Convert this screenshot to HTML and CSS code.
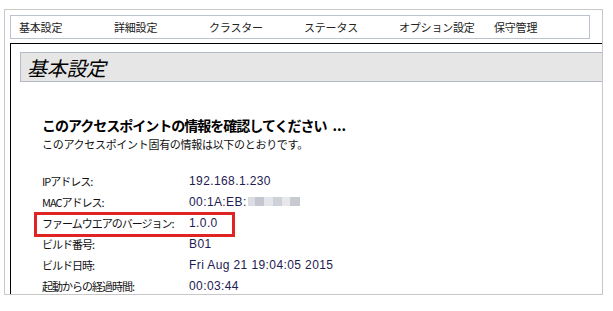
FILE: index.html
```html
<!DOCTYPE html>
<html lang="ja">

<head>
  <meta charset="UTF-8">
  <title>基本設定</title>
  <link rel="stylesheet" href="styles.css">
</head>

<body>
  <div class="frame">
    <!-- 上部メニュー -->
    <nav class="top-nav">
      <a href="#">基本設定</a>
      <a href="#">詳細設定</a>
      <a href="#">クラスター</a>
      <a href="#">ステータス</a>
      <a href="#">オプション設定</a>
      <a href="#">保守管理</a>
    </nav>

    <!-- メイン領域 -->
    <div class="main">
      <div class="title-bar">
        <h1>基本設定</h1>
      </div>

      <div class="info">
        <h2>このアクセスポイントの情報を確認してください<span class="dots">...</span></h2>
        <p class="lead">このアクセスポイント固有の情報は以下のとおりです。</p>

        <div class="rows">
          <div class="row">
            <span class="label">IPアドレス:</span>
            <span class="value">192.168.1.230</span>
          </div>
          <div class="row">
            <span class="label">MACアドレス:</span>
            <span class="value">00:1A:EB:<span class="blur"><i class="b1"></i><i class="b2"></i><i class="b3"></i><i class="b4"></i><i class="b5"></i><i class="b6"></i></span></span>
          </div>
          <div class="row marked">
            <span class="label">ファームウエアのバージョン:</span>
            <span class="value">1.0.0</span>
          </div>
          <div class="row">
            <span class="label">ビルド番号:</span>
            <span class="value">B01</span>
          </div>
          <div class="row">
            <span class="label">ビルド日時:</span>
            <span class="value">Fri Aug 21 19:04:05 2015</span>
          </div>
          <div class="row">
            <span class="label">起動からの経過時間:</span>
            <span class="value">00:03:44</span>
          </div>
        </div>
      </div>
    </div>
  </div>
</body>

</html>
```

FILE: styles.css
```css
/* ページ全体 */
html,
body {
  margin: 0;
  padding: 0;
  background-color: white;
  font-family: "Noto Sans CJK JP", sans-serif;
  color: #111;
}

/* 外枠 */
.frame {
  box-sizing: border-box;
  margin: 9px 0 0 4px;
  width: 599px;
  height: 286px;
  border: 1px solid #c8c8c8;
  padding: 5px 0 0 5px;
  overflow: hidden;
}

/* 上部メニュー */
.top-nav {
  box-sizing: border-box;
  width: 580px;
  height: 24px;
  border: 1px solid #bcc2d0;
  padding-left: 8px;
  display: flex;
  align-items: center;
}

.top-nav a {
  width: 95px;
  flex: none;
  font-size: 11px;
  letter-spacing: -0.2px;
  color: #222;
  text-decoration: none;
}

/* メイン領域 */
.main {
  margin-top: 4px;
  height: 260px;
  border-top: 1px solid #000;
  border-left: 1px solid #000;
  padding: 8px 0 0 9px;
}

.title-bar {
  box-sizing: border-box;
  height: 30px;
  background-color: #e6e6e6;
  border: 1px solid #b4bac8;
  border-right: none;
  padding-left: 6px;
  display: flex;
  align-items: center;
}

.title-bar h1 {
  margin: 0;
  font-size: 20px;
  font-weight: normal;
  font-style: italic;
  letter-spacing: -0.3px;
  color: #000;
}

/* 情報表示 */
.info {
  padding-left: 22px;
}

.info h2 {
  margin: 33px 0 0;
  font-size: 14px;
  line-height: 20px;
  font-weight: bold;
  letter-spacing: -1px;
  color: #000;
}

.info h2 .dots {
  margin-left: 6px;
  letter-spacing: 0;
}

.lead {
  margin: 1px 0 0;
  font-size: 11px;
  line-height: 16px;
  letter-spacing: -0.3px;
}

.rows {
  margin-top: 18px;
}

.row {
  position: relative;
  display: flex;
  height: 21px;
  align-items: center;
}

.label {
  width: 147px;
  flex: none;
  font-size: 11px;
  letter-spacing: -1px;
}

.value {
  font-family: "Liberation Sans", "Noto Sans CJK JP", sans-serif;
  font-size: 12px;
  letter-spacing: 0.4px;
  color: #1c2050;
  display: flex;
  align-items: center;
}

/* 赤枠の強調 */
.marked::before {
  content: "";
  position: absolute;
  left: -8px;
  top: 0;
  width: 201px;
  height: 25px;
  box-sizing: border-box;
  border: 3px solid #e02424;
}

/* MACアドレスのぼかし */
.blur {
  display: inline-flex;
  margin-left: 1px;
}

.blur i {
  display: inline-block;
  width: 9px;
  height: 9px;
}

.blur .b1 { background-color: #dcdde4; width: 7px; }
.blur .b2 { background-color: #c4c6d0; }
.blur .b3 { background-color: #e4e5ea; }
.blur .b4 { background-color: #cfd1d9; }
.blur .b5 { background-color: #e8e8ec; width: 8px; }
.blur .b6 { background-color: #c8cad2; width: 10px; }
```
